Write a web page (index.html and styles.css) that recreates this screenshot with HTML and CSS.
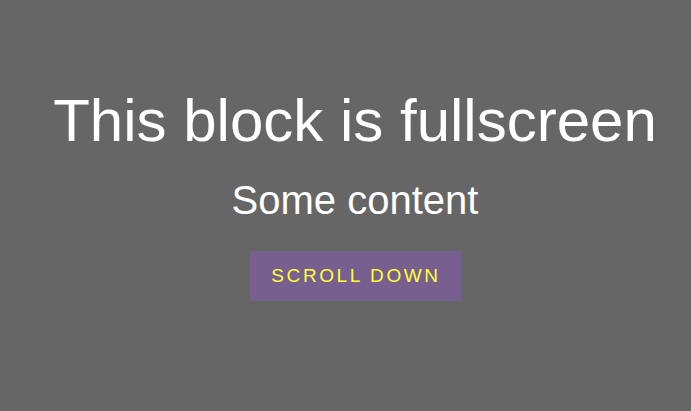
FILE: index.html
```html
<!DOCTYPE html>
<html>
<head>
<meta charset="utf-8">
<link rel="stylesheet" href="styles.css">
</head>
<body>
<section class="hero">
  <h1 class="hero-title">This block is fullscreen</h1>
  <p class="hero-sub">Some content</p>
  <a class="hero-btn" href="#">Scroll down</a>
</section>
</body>
</html>
```

FILE: styles.css
```css
html, body {
  margin: 0;
  padding: 0;
  height: 100%;
}
body {
  background: #666666;
  font-family: "Liberation Sans", Arial, sans-serif;
  color: #ffffff;
}
.hero {
  height: 100%;
  display: flex;
  flex-direction: column;
  align-items: center;
  justify-content: center;
  text-align: center;
  padding: 0 0 24px 19px;
  box-sizing: border-box;
}
.hero-title {
  font-size: 60px;
  font-weight: normal;
  margin: 0;
  line-height: 69px;
}
.hero-sub {
  font-size: 40px;
  margin: 22px 0 0;
  line-height: 46px;
}
.hero-btn {
  margin-top: 28px;
  display: inline-block;
  width: 211px;
  height: 50px;
  line-height: 50px;
  padding-left: 2px;
  box-sizing: border-box;
  background: #775f8f;
  color: #ffff33;
  font-size: 19px;
  letter-spacing: 2.6px;
  text-transform: uppercase;
  text-decoration: none;
}
```
